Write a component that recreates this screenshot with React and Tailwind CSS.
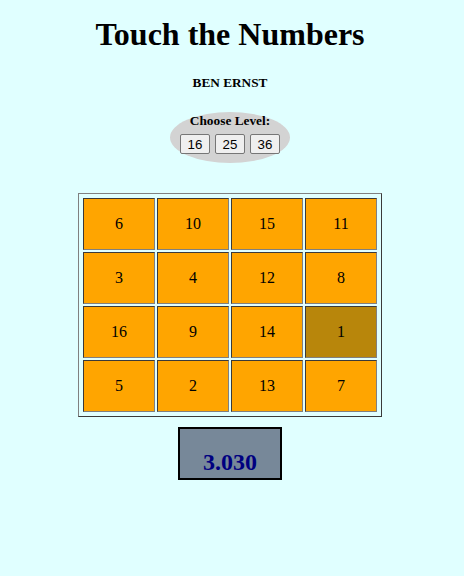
import React from "react";

const rows = [
  [6, 10, 15, 11],
  [3, 4, 12, 8],
  [16, 9, 14, 1],
  [5, 2, 13, 7],
];

export default function App() {
  return (
    <div className="min-h-[576px] w-full bg-[#e0ffff] text-black" style={{ fontFamily: '"Liberation Serif", "Times New Roman", serif' }}>
      <div className="w-[460px] flex flex-col items-center">
        <h1 className="mt-[16px] text-[32px] leading-[36px] font-bold">Touch the Numbers</h1>
        <h5 className="mt-[23px] text-[13.28px] leading-[15px] font-bold">BEN ERNST</h5>
        <div className="mt-[22px] w-[120px] h-[51px] rounded-[50%] bg-[#d3d3d3] flex flex-col items-center pt-[1px]">
          <div className="text-[13.33px] leading-[15px] font-bold">Choose Level:</div>
          <div className="mt-[6px] flex gap-[5px]">
            {["16", "25", "36"].map((l) => (
              <button
                key={l}
                className="w-[30px] h-[20px] bg-[#efefef] border border-[#767676] rounded-[2px] text-[13.33px] leading-[15px] text-black flex items-center justify-center"
                style={{ fontFamily: '"Liberation Sans", Arial, sans-serif' }}
              >
                {l}
              </button>
            ))}
          </div>
        </div>
        <div className="mt-[30px] w-[304px] border border-t-[#808080] border-l-[#808080] border-r-[#3a3a3a] border-b-[#3a3a3a] p-[4px] grid grid-cols-4 gap-[2px]">
          {rows.flat().map((n) => (
            <div
              key={n}
              className={`h-[52px] border border-t-[#3a3a3a] border-l-[#3a3a3a] border-r-[#808080] border-b-[#808080] flex items-center justify-center text-[16px] leading-[18px] ${n === 1 ? "bg-[#b8860b]" : "bg-[#ffa500]"}`}
            >
              {n}
            </div>
          ))}
        </div>
        <div className="mt-[10px] w-[104px] h-[53px] border-2 border-black bg-[#778899] flex justify-center pt-[19px]">
          <span className="text-[24px] leading-[28px] font-bold text-[#000080]">3.030</span>
        </div>
      </div>
    </div>
  );
}
